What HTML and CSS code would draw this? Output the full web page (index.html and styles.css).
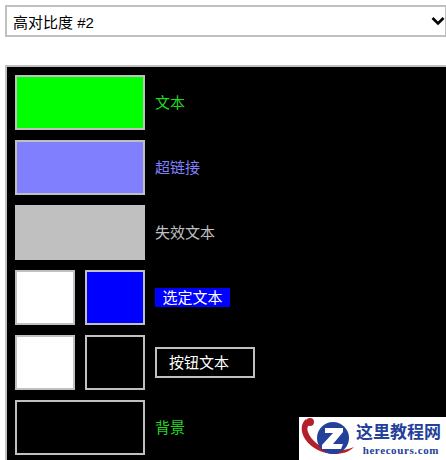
FILE: index.html
```html
<!DOCTYPE html>
<html lang="zh-CN">
<head>
<meta charset="utf-8">
<title>高对比度</title>
<link rel="stylesheet" href="styles.css">
</head>
<body>
<div class="page">
  <div class="select">
    <span>高对比度 #2</span>
    <svg class="chevron" width="14" height="10" viewBox="0 0 14 10"><path d="M1.500 2 L7 7.500 L12.500 2" fill="none" stroke="#000" stroke-width="2.600"/></svg>
  </div>
  <div class="panel">
    <div class="row">
      <div class="swatches"><div class="swatch wide green"></div></div>
      <span class="label text-green">文本</span>
    </div>
    <div class="row">
      <div class="swatches"><div class="swatch wide violet"></div></div>
      <span class="label text-violet">超链接</span>
    </div>
    <div class="row">
      <div class="swatches"><div class="swatch wide grey"></div></div>
      <span class="label text-grey">失效文本</span>
    </div>
    <div class="row">
      <div class="swatches"><div class="swatch white"></div><div class="swatch blue"></div></div>
      <span class="label selected">选定文本</span>
    </div>
    <div class="row">
      <div class="swatches"><div class="swatch white"></div><div class="swatch black"></div></div>
      <span class="label button">按钮文本</span>
    </div>
    <div class="row">
      <div class="swatches"><div class="swatch wide black"></div></div>
      <span class="label text-green">背景</span>
    </div>
  </div>
</div>
<div class="watermark">
  <svg class="logo" width="56" height="43" viewBox="0 0 56 43">
    <path d="M7 2 C2 6 1 14 6 22 C12 31 24 37 36 37 C43 37 50 35 55 30 C48 33 41 34 33 33 C22 31 12 24 9 15 C8 12 8 10 10 8 Z" fill="#b3202a"/>
    <circle cx="11" cy="5" r="4" fill="#b3202a"/>
    <circle cx="34" cy="21" r="16" fill="#24409a"/>
    <path d="M26 11 H44 V15 L34 27 H44 L42 32 H23 V28 L34 16 H26 Z" fill="#fff"/>
  </svg>
  <div class="brand">
    <div class="brand-cn">这里教程网</div>
    <div class="brand-en">herecours.com</div>
  </div>
</div>
</body>
</html>
```

FILE: styles.css
```css
html, body {
  margin: 0;
  padding: 0;
  width: 446px;
  height: 460px;
  overflow: hidden;
  background: #fff;
}
body {
  position: relative;
  font-family: "Noto Sans CJK SC", "Liberation Sans", sans-serif;
}
.page {
  width: 460px;
  padding: 5px 0 0 5px;
  box-sizing: border-box;
}
.select {
  width: 442px;
  height: 32px;
  box-sizing: border-box;
  border: 2px solid #c0c0c0;
  background: #fff;
  display: flex;
  align-items: center;
  justify-content: space-between;
  padding: 0 0 0 6px;
  font-size: 15px;
  color: #000;
}
.select span {
  font-family: "Liberation Sans", "Noto Sans CJK SC", sans-serif;
}
.panel {
  margin-top: 28px;
  width: 450px;
  height: 410px;
  box-sizing: border-box;
  background: #000;
  border: 2px solid #c0c0c0;
  padding: 8px;
  display: flex;
  flex-direction: column;
  gap: 10px;
}
.row {
  display: flex;
  align-items: center;
  gap: 10px;
  height: 55px;
  flex: none;
}
.swatches {
  display: flex;
  gap: 10px;
  width: 130px;
}
.swatch {
  width: 60px;
  height: 55px;
  box-sizing: border-box;
  border: 2px solid #c0c0c0;
}
.swatch.wide { width: 130px; }
.green { background: #00ff00; }
.violet { background: #8080ff; }
.grey { background: #c0c0c0; }
.white { background: #fff; }
.blue { background: #0000ff; }
.black { background: #000; }
.label {
  font-size: 15px;
  line-height: 18px;
  margin-top: -2px;
}
.text-green { color: #22d822; }
.text-violet { color: #8080ff; }
.text-grey { color: #c0c0c0; }
.selected {
  background: #0000ff;
  color: #fff;
  width: 75px;
  height: 19px;
  margin-top: 0;
  text-align: center;
  line-height: 17px;
}
.button {
  width: 100px;
  height: 31px;
  margin-top: 0;
  box-sizing: border-box;
  border: 2px solid #c0c0c0;
  color: #fff;
  padding-left: 12px;
  line-height: 25px;
}
.watermark {
  position: absolute;
  left: 299px;
  top: 417px;
  width: 147px;
  height: 43px;
  background: #fff;
  display: flex;
  align-items: center;
  gap: 1px;
}
.logo {
  flex: none;
}
.brand {
  display: flex;
  flex-direction: column;
  align-items: flex-end;
  gap: 3px;
  margin-top: -1px;
}
.brand-cn {
  font-family: "Noto Sans CJK SC", sans-serif;
  font-weight: 700;
  font-size: 17px;
  line-height: 20px;
  color: #24409a;
  white-space: nowrap;
}
.brand-en {
  font-family: "Liberation Serif", serif;
  font-weight: 700;
  font-size: 11px;
  line-height: 12px;
  letter-spacing: 0.6px;
  margin-right: 2px;
  color: #24409a;
  white-space: nowrap;
}
```
